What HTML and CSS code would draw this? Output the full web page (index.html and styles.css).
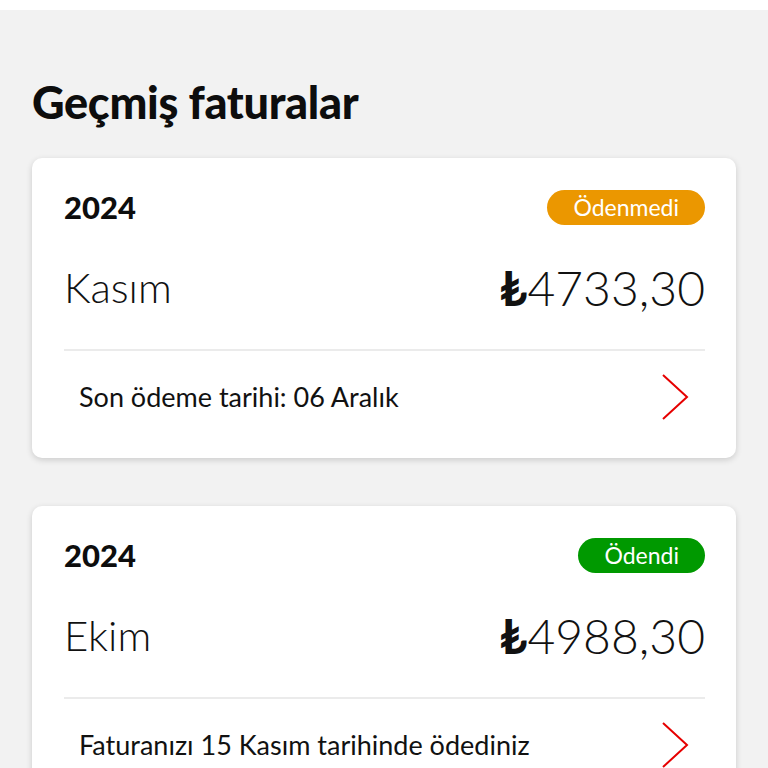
FILE: index.html
```html
<!DOCTYPE html>
<html lang="tr">
<head>
<meta charset="utf-8">
<link rel="stylesheet" href="styles.css">
</head>
<body>
<div class="topbar"></div>
<main class="page">
  <h1 class="title">Geçmiş faturalar</h1>
  <section class="card">
    <div class="row-top">
      <span class="year">2024</span>
      <span class="badge badge-unpaid">Ödenmedi</span>
    </div>
    <div class="row-main">
      <span class="month">Kasım</span>
      <span class="amount"><span class="lira">₺</span>4733,30</span>
    </div>
    <div class="divider"></div>
    <div class="row-foot">
      <span class="note">Son ödeme tarihi: 06 Aralık</span>
      <svg class="chev" width="28" height="48" viewBox="0 0 28 48"><polyline points="2,2 26,24 2,46" fill="none" stroke="#e60000" stroke-width="2"/></svg>
    </div>
  </section>
  <section class="card">
    <div class="row-top">
      <span class="year">2024</span>
      <span class="badge badge-paid">Ödendi</span>
    </div>
    <div class="row-main">
      <span class="month">Ekim</span>
      <span class="amount"><span class="lira">₺</span>4988,30</span>
    </div>
    <div class="divider"></div>
    <div class="row-foot">
      <span class="note">Faturanızı 15 Kasım tarihinde ödediniz</span>
      <svg class="chev" width="28" height="48" viewBox="0 0 28 48"><polyline points="2,2 26,24 2,46" fill="none" stroke="#e60000" stroke-width="2"/></svg>
    </div>
  </section>
</main>
</body>
</html>
```

FILE: styles.css
```css
* { box-sizing: border-box; }
html, body { margin: 0; padding: 0; }
body {
  background: #f2f2f2;
  font-family: Lato, "Noto Sans", "DejaVu Sans", sans-serif;
  color: #111;
  overflow: hidden;
}
.topbar { height: 10px; background: #fff; }
.page { padding: 0 32px; }
.title {
  margin: 0;
  padding-top: 66px;
  font-size: 45px;
  line-height: 52px;
  font-weight: 900;
  letter-spacing: -0.3px;
  color: #0d0d0d;
  height: 148px;
}
.card {
  background: #fff;
  border-radius: 10px;
  box-shadow: 0 2px 6px rgba(0,0,0,0.16);
  padding: 31px 31px 0 32px;
  margin-bottom: 48px;
  height: 300px;
}
.row-top {
  display: flex;
  justify-content: space-between;
  align-items: center;
  height: 36px;
}
.year { font-size: 31px; font-weight: 900; color: #0d0d0d; }
.badge {
  color: #fff;
  font-size: 23px;
  line-height: 35px;
  height: 35px;
  padding: 0 26px;
  border-radius: 18px;
  font-weight: 400;
}
.badge-unpaid { background: #eb9700; }
.badge-paid { background: #009900; }
.row-main {
  display: flex;
  justify-content: space-between;
  align-items: center;
  height: 60px;
  margin-top: 32px;
}
.month { font-size: 42px; font-weight: 300; }
.amount { font-size: 48px; font-weight: 300; }
.lira { font-weight: 700; }
.divider { height: 2px; background: #ebebeb; margin-top: 32px; }
.row-foot {
  display: flex;
  justify-content: space-between;
  align-items: center;
  padding: 21px 16px 0 15px;
  height: 70px;
}
.note { font-size: 27px; font-weight: 400; }
```
